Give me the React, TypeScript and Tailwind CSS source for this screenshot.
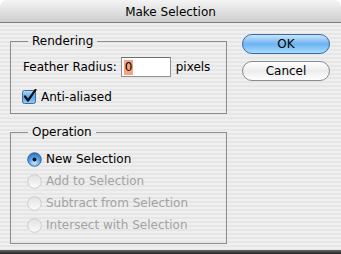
import React from 'react';

const font = { fontFamily: '"DejaVu Sans", "Liberation Sans", sans-serif' };

const Checkbox = () => (
    <svg width="15" height="15" viewBox="0 0 15 15" className="shrink-0">
        <defs>
            <linearGradient id="cb" x1="0" y1="0" x2="0" y2="1">
                <stop offset="0" stopColor="#b7dcf8" />
                <stop offset="0.5" stopColor="#5aa6e8" />
                <stop offset="1" stopColor="#8fd0fb" />
            </linearGradient>
        </defs>
        <rect x="0.5" y="1.5" width="13" height="13" rx="2" fill="url(#cb)" stroke="#3f6d98" />
        <path d="M3 7.5 L6 11.5 L13.5 0.8" fill="none" stroke="#111" strokeWidth="2.2" strokeLinecap="round" strokeLinejoin="round" />
    </svg>
);

const Radio = ({ on }: { on?: boolean }) => (
    <svg width="15" height="15" viewBox="0 0 15 15" className="shrink-0">
        <defs>
            <radialGradient id="rb" cx="0.5" cy="0.75" r="0.7">
                <stop offset="0" stopColor="#c8ecff" />
                <stop offset="0.6" stopColor="#4f9de6" />
                <stop offset="1" stopColor="#2f6fb8" />
            </radialGradient>
            <linearGradient id="rg" x1="0" y1="0" x2="0" y2="1">
                <stop offset="0" stopColor="#e2e2e2" />
                <stop offset="1" stopColor="#fbfbfb" />
            </linearGradient>
        </defs>
        {on ? (
            <>
                <circle cx="7.5" cy="7.5" r="6.8" fill="url(#rb)" stroke="#2b5d94" strokeWidth="0.8" />
                <circle cx="7.5" cy="7.5" r="2" fill="#111" />
            </>
        ) : (
            <circle cx="7.5" cy="7.5" r="6.8" fill="url(#rg)" stroke="#c4c4c4" strokeWidth="0.8" />
        )}
    </svg>
);

const MakeSelection = () => {
    const radios = ['New Selection', 'Add to Selection', 'Subtract from Selection', 'Intersect with Selection'];

    return (
        <div className="w-[341px] h-[254px] flex flex-col overflow-hidden text-[12px] text-black" style={font}>
            {/* title bar */}
            <div className="h-[23px] shrink-0 rounded-t-[7px] border-b border-[#7d7d7d] bg-gradient-to-b from-[#f4f4f4] to-[#cfcfcf] flex items-center justify-center">
                <span className="text-[12px] leading-none pt-[1px]">Make Selection</span>
            </div>

            <div className="flex-1 flex bg-[repeating-linear-gradient(180deg,#efefef_0px,#efefef_2px,#e6e6e6_2px,#e6e6e6_4px)] pl-[10px] pt-[10px]">
                <div className="w-[217px] flex flex-col gap-[10px]">
                    <fieldset className="border border-[#8d8d8d] px-[12px] pt-[8px] pb-[9px]">
                        <legend className="px-[4px] ml-[5px] leading-[16px]">Rendering</legend>
                        <div className="flex items-center h-[20px]">
                            <span>Feather Radius:</span>
                            <div className="ml-[4px] w-[50px] h-[20px] bg-white border border-[#8f8f8f] border-t-[#6e6e6e] flex items-center pl-[2px]">
                                <span className="bg-[#f5a47f] px-[1px] leading-[15px]">0</span>
                            </div>
                            <span className="ml-[5px]">pixels</span>
                        </div>
                        <div className="flex items-center gap-[4px] mt-[12px] h-[15px] -ml-[1px]">
                            <Checkbox />
                            <span>Anti-aliased</span>
                        </div>
                    </fieldset>

                    <fieldset className="border border-[#8d8d8d] px-[16px] pt-[8px] pb-[7px]">
                        <legend className="px-[4px] ml-[1px] leading-[16px]">Operation</legend>
                        {radios.map((r, i) => (
                            <div key={r} className="flex items-center gap-[4px] h-[22px]">
                                <Radio on={i === 0} />
                                <span className={i === 0 ? 'text-black' : 'text-[#a3a3a3]'}>{r}</span>
                            </div>
                        ))}
                    </fieldset>
                </div>

                <div className="flex flex-col ml-[15px] pt-[1px] gap-[7px]">
                    <button className="w-[88px] h-[20px] rounded-full border border-[#3d6aa6] bg-gradient-to-b from-[#c9e5fb] via-[#6cb2f0] to-[#a8ddfd] leading-none">
                        OK
                    </button>
                    <button className="w-[88px] h-[20px] rounded-full border border-[#8a8a8a] bg-gradient-to-b from-[#ffffff] via-[#ececec] to-[#ffffff] leading-none">
                        Cancel
                    </button>
                </div>
            </div>

            <div className="h-[4px] shrink-0 bg-gradient-to-b from-[#6a6a6a] to-[#222]" />
        </div>
    );
};

export default MakeSelection;
